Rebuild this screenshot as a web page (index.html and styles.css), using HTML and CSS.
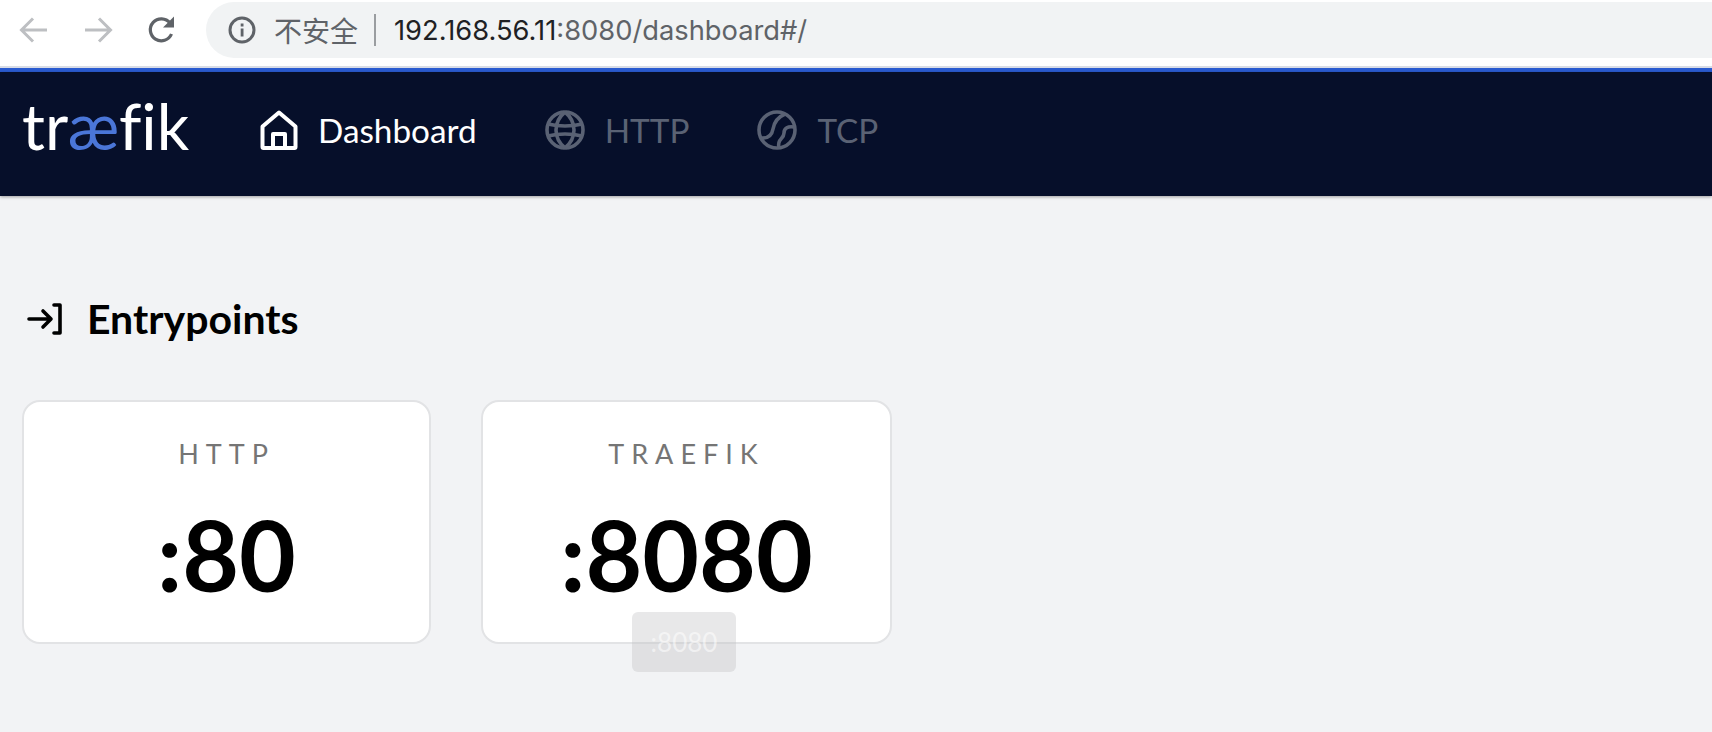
FILE: index.html
```html
<!DOCTYPE html>
<html>
<head>
    <meta charset="UTF-8">
    <title>Traefik</title>
    <link rel="stylesheet" href="styles.css">
</head>
<body>
    <div class="browser-bar">
        <div class="browser-btn">
            <svg width="32" height="32" viewBox="0 0 32 32" fill="none" stroke="#bdbfc2" stroke-width="3"><path d="M29 16H4M15 4.500L3.500 16 15 27.500"/></svg>
        </div>
        <div class="browser-btn">
            <svg width="32" height="32" viewBox="0 0 32 32" fill="none" stroke="#bdbfc2" stroke-width="3"><path d="M3 16h25M17 4.500L28.500 16 17 27.500"/></svg>
        </div>
        <div class="browser-btn">
            <svg width="32" height="32" viewBox="0 0 32 32"><path d="M25.500 20a11 11 0 1 1-1.500-11" fill="none" stroke="#5f6368" stroke-width="3.200"/><path d="M28 2.500V13.500H17z" fill="#5f6368"/></svg>
        </div>
        <div class="address">
            <svg class="info-icon" width="28" height="28" viewBox="0 0 28 28"><circle cx="14" cy="14" r="12" fill="none" stroke="#5f6368" stroke-width="3"/><rect x="12.700" y="12.500" width="2.800" height="8" fill="#5f6368"/><rect x="12.700" y="7.500" width="2.800" height="3" fill="#5f6368"/></svg>
            <span class="not-secure">不安全</span>
            <span class="address-sep"></span>
            <span class="url"><span class="url-host">192.168.56.11</span>:8080/dashboard#/</span>
        </div>
    </div>

    <div class="progress"></div>

    <nav class="navbar">
        <div class="logo">tr<span class="logo-ae">æ</span>fik</div>
        <a class="nav-item active">
            <svg width="38" height="40" viewBox="0 0 38 40" fill="none" stroke="currentColor" stroke-width="4" stroke-linejoin="round"><path d="M2.500 16.500L19 2.500l16.500 14V37a1 1 0 0 1-1 1h-31a1 1 0 0 1-1-1z"/><path d="M13 38V24h12v14"/></svg>
            Dashboard
        </a>
        <a class="nav-item">
            <svg width="40" height="40" viewBox="0 0 40 40" fill="none" stroke="currentColor" stroke-width="3.600"><circle cx="20" cy="20" r="18"/><path d="M20 2c-12 10-12 26 0 36M20 2c12 10 12 26 0 36"/><path d="M3 14c10 2.500 24 2.500 34 0M3 26c10-2.500 24-2.500 34 0"/></svg>
            HTTP
        </a>
        <a class="nav-item">
            <svg width="40" height="40" viewBox="0 0 40 40" fill="none" stroke="currentColor" stroke-width="3.600"><circle cx="20" cy="20" r="18"/><path d="M3 28c8 1 12-3 13-9 1-6 5-12 12-15"/><path d="M37 17c-6-1-10 1-10 6 0 3-1 4-3 6-2 2-3 5-2 9"/></svg>
            TCP
        </a>
    </nav>

    <main class="content">
        <h2 class="section-title">
            <svg width="36" height="32" viewBox="0 0 36 32" fill="none" stroke="#000" stroke-width="3.600" stroke-linecap="round" stroke-linejoin="round"><path d="M2 16h21M16 8l8 8-8 8M27 2h6v28h-6"/></svg>
            Entrypoints
        </h2>
        <div class="cards">
            <div class="card">
                <div class="card-label">HTTP</div>
                <div class="card-value">:80</div>
            </div>
            <div class="card card-wide">
                <div class="card-label">TRAEFIK</div>
                <div class="card-value">:8080</div>
                <div class="tooltip">:8080</div>
            </div>
        </div>
    </main>
</body>
</html>
```

FILE: styles.css
```css
* {
    box-sizing: border-box;
}
body {
    margin: 0;
    height: 732px;
    overflow: hidden;
    background: #f2f3f5;
    font-family: Lato, "Noto Sans", sans-serif;
    color: #000;
}
.browser-bar {
    display: flex;
    align-items: center;
    height: 66px;
    padding: 0 0 6px 18px;
    background: #fff;
}
.browser-btn {
    display: flex;
    width: 64px;
    justify-content: flex-start;
}
.address {
    display: flex;
    align-items: center;
    flex: 1;
    height: 56px;
    margin-left: -4px;
    padding-left: 22px;
    background: #f1f3f4;
    border-radius: 28px 0 0 28px;
    font-family: Inter, sans-serif;
    font-size: 27.300px;
    color: #5f6368;
}
.info-icon {
    margin-right: 18px;
}
.not-secure {
    font-family: "Noto Sans CJK SC", sans-serif;
    font-size: 28px;
}
.address-sep {
    width: 2px;
    height: 32px;
    margin: 0 18px 0 16px;
    background: #9a9da0;
}
.url-host {
    color: #202124;
}
.progress {
    height: 6px;
    background: #2a5bd0;
    border-top: 2px solid #d8dce6;
}
.navbar {
    display: flex;
    align-items: center;
    height: 124px;
    padding-left: 22px;
    background: #060f2a;
    box-shadow: 0 1px 3px rgba(0,0,0,0.35);
}
.logo {
    width: 238px;
    padding-bottom: 16px;
    font-size: 64px;
    font-variant-ligatures: none;
    line-height: 1;
    color: #fff;
}
.logo-ae {
    color: #4a76d8;
}
.nav-item {
    display: flex;
    align-items: center;
    gap: 20px;
    margin-right: 68px;
    padding-bottom: 8px;
    font-size: 33.300px;
    color: #5a6274;
}
.nav-item.active {
    color: #fff;
}
.content {
    padding: 100px 22px 0;
}
.section-title {
    display: flex;
    align-items: center;
    gap: 24px;
    margin: 0 0 58px 5px;
    font-size: 41px;
    font-weight: 700;
    line-height: 46px;
}
.cards {
    display: flex;
    gap: 50px;
}
.card {
    position: relative;
    width: 409px;
    height: 244px;
    padding-top: 35px;
    background: #fff;
    border: 2px solid #e2e3e5;
    border-radius: 18px;
    text-align: center;
}
.card-wide {
    width: 411px;
}
.card-label {
    font-size: 27px;
    line-height: 34px;
    letter-spacing: 7px;
    color: #757575;
}
.card-value {
    margin-top: 28px;
    font-size: 98px;
    font-weight: 700;
    line-height: 110px;
}
.tooltip {
    position: absolute;
    left: 149px;
    top: 210px;
    width: 104px;
    height: 60px;
    background: rgba(190, 192, 195, 0.36);
    border-radius: 6px;
    font-size: 26px;
    line-height: 60px;
    color: rgba(255,255,255,0.55);
}
```
